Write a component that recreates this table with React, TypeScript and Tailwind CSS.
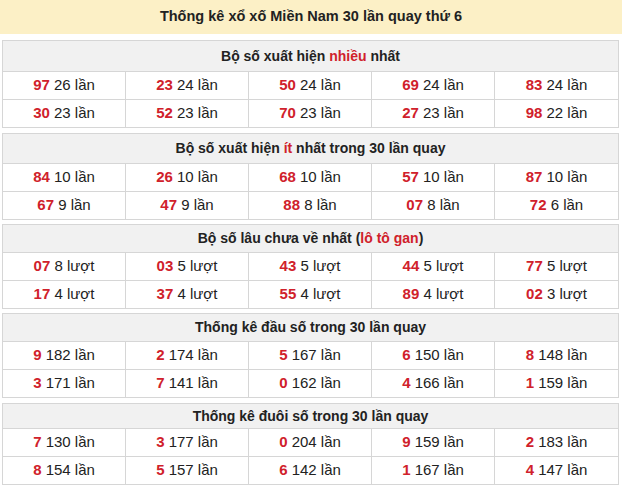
import React from "react";

type Cell = [string, string];

const RED = "text-[#d0212b]";

function Row({ cells, unit, last }: { cells: Cell[]; unit: string; last?: boolean }) {
  return (
    <div className={`grid grid-cols-5 ${last ? "" : "border-b border-[#d6d6d6]"}`}>
      {cells.map((c, i) => (
        <div
          key={i}
          className={`h-[27px] flex items-center justify-center text-[15px] text-[#222] ${
            i < 4 ? "border-r border-[#d6d6d6]" : ""
          }`}
        >
          <span className={`font-bold ${RED}`}>{c[0]}</span>
          <span>&nbsp;{c[1]} {unit}</span>
        </div>
      ))}
    </div>
  );
}

function Table({
  title,
  headH,
  mt,
  rows,
  unit,
}: {
  title: React.ReactNode;
  headH: string;
  mt: string;
  rows: Cell[][];
  unit: string;
}) {
  return (
    <div className={`${mt} border border-[#d6d6d6]`}>
      <div
        className={`${headH} bg-[#f1f1f1] border-b border-[#d6d6d6] flex items-center justify-center text-[14px] font-bold text-[#222]`}
      >
        {title}
      </div>
      <Row cells={rows[0]} unit={unit} />
      <Row cells={rows[1]} unit={unit} last />
    </div>
  );
}

export default function App() {
  return (
    <div className="w-[622px] h-[488px] bg-white font-['Liberation_Sans',Arial,sans-serif] overflow-hidden">
      <div className="h-[34px] bg-[#fcf0c6] flex items-center justify-center text-[14.5px] font-bold text-[#222]">
        Thống kê xổ xố Miền Nam 30 lần quay thứ 6
      </div>
      <div className="px-[2px] pr-[3px] flex flex-col">
        <Table
          mt="mt-[6px]"
          headH="h-[31px]"
          unit="lần"
          title={
            <span>
              Bộ số xuất hiện <span className={RED}>nhiều</span> nhất
            </span>
          }
          rows={[
            [["97", "26"], ["23", "24"], ["50", "24"], ["69", "24"], ["83", "24"]],
            [["30", "23"], ["52", "23"], ["70", "23"], ["27", "23"], ["98", "22"]],
          ]}
        />
        <Table
          mt="mt-[5px]"
          headH="h-[30px]"
          unit="lần"
          title={
            <span>
              Bộ số xuất hiện <span className={RED}>ít</span> nhất trong 30 lần quay
            </span>
          }
          rows={[
            [["84", "10"], ["26", "10"], ["68", "10"], ["57", "10"], ["87", "10"]],
            [["67", "9"], ["47", "9"], ["88", "8"], ["07", "8"], ["72", "6"]],
          ]}
        />
        <Table
          mt="mt-[4px]"
          headH="h-[28px]"
          unit="lượt"
          title={
            <span>
              Bộ số lâu chưa về nhất (<span className={RED}>lô tô gan</span>)
            </span>
          }
          rows={[
            [["07", "8"], ["03", "5"], ["43", "5"], ["44", "5"], ["77", "5"]],
            [["17", "4"], ["37", "4"], ["55", "4"], ["89", "4"], ["02", "3"]],
          ]}
        />
        <Table
          mt="mt-[4px]"
          headH="h-[28px]"
          unit="lần"
          title={<span>Thống kê đầu số trong 30 lần quay</span>}
          rows={[
            [["9", "182"], ["2", "174"], ["5", "167"], ["6", "150"], ["8", "148"]],
            [["3", "171"], ["7", "141"], ["0", "162"], ["4", "166"], ["1", "159"]],
          ]}
        />
        <Table
          mt="mt-[5px]"
          headH="h-[25px]"
          unit="lần"
          title={<span>Thống kê đuôi số trong 30 lần quay</span>}
          rows={[
            [["7", "130"], ["3", "177"], ["0", "204"], ["9", "159"], ["2", "183"]],
            [["8", "154"], ["5", "157"], ["6", "142"], ["1", "167"], ["4", "147"]],
          ]}
        />
      </div>
    </div>
  );
}
